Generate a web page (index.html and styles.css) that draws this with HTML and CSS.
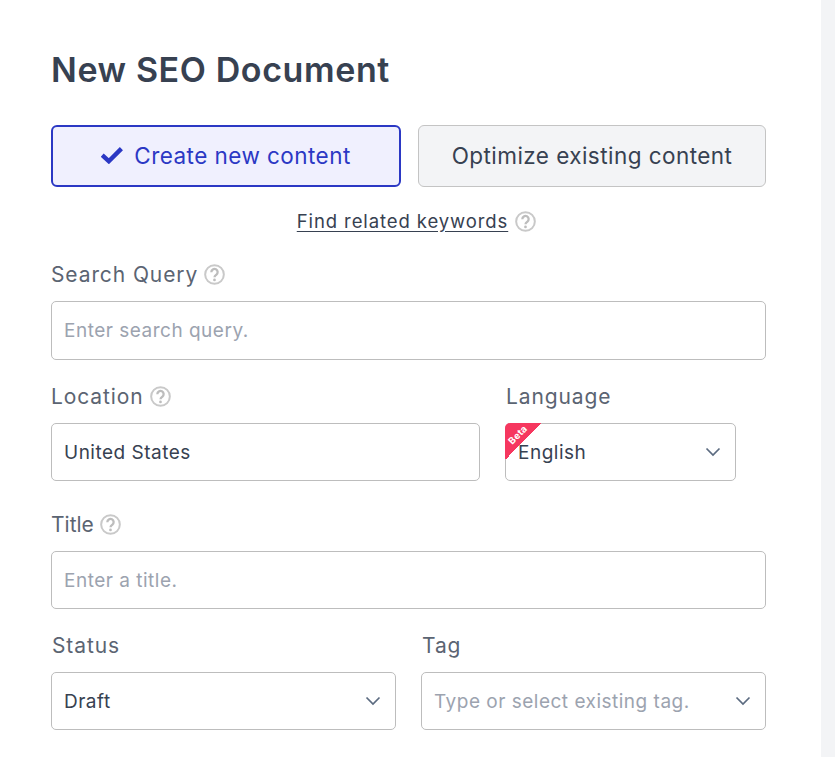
FILE: index.html
```html
<!DOCTYPE html>
<html lang="en">
<head>
<meta charset="utf-8">
<title>New SEO Document</title>
<link rel="stylesheet" href="styles.css">
</head>
<body>
<div class="page">
  <main class="panel">
    <h1 class="title">New SEO Document</h1>
    <div class="modes">
      <button class="mode mode-active" type="button">
        <svg class="check" viewBox="0 0 22 18" width="22" height="18"><path d="M1.2 9.2 7.8 15.2 20.4 2.6" fill="none" stroke="#2b38c4" stroke-width="4.4"/></svg>
        <span>Create new content</span>
      </button>
      <button class="mode mode-other" type="button">Optimize existing content</button>
    </div>
    <div class="related">
      <a class="related-link" href="#">Find related keywords</a>
      <svg class="help" viewBox="0 0 20 20" width="21" height="21"><use href="#q"/></svg>
    </div>

    <div class="field field-query">
      <label class="label">Search Query <svg class="help" viewBox="0 0 20 20" width="21" height="21"><use href="#q"/></svg></label>
      <div class="box box-tall"><span class="placeholder">Enter search query.</span></div>
    </div>

    <div class="row row-location">
      <div class="field field-location">
        <label class="label">Location <svg class="help" viewBox="0 0 20 20" width="21" height="21"><use href="#q"/></svg></label>
        <div class="box"><span class="value">United States</span></div>
      </div>
      <div class="field field-language">
        <label class="label label-shift">Language</label>
        <div class="box box-select">
          <span class="value">English</span>
          <svg class="chevron" viewBox="0 0 16 10" width="16" height="10"><use href="#c"/></svg>
          <span class="ribbon"><span class="ribbon-text">Beta</span></span>
        </div>
      </div>
    </div>

    <div class="field field-title">
      <label class="label"><span class="label-tight">Title</span> <svg class="help" viewBox="0 0 20 20" width="21" height="21"><use href="#q"/></svg></label>
      <div class="box"><span class="placeholder">Enter a title.</span></div>
    </div>

    <div class="row row-status">
      <div class="field field-half">
        <label class="label label-shift">Status</label>
        <div class="box box-select"><span class="value">Draft</span><svg class="chevron" viewBox="0 0 16 10" width="16" height="10"><use href="#c"/></svg></div>
      </div>
      <div class="field field-half">
        <label class="label label-shift">Tag</label>
        <div class="box box-select"><span class="placeholder">Type or select existing tag.</span><svg class="chevron" viewBox="0 0 16 10" width="16" height="10"><use href="#c"/></svg></div>
      </div>
    </div>
  </main>
  <div class="rail"></div>
</div>
<svg class="defs" width="0" height="0" aria-hidden="true">
  <symbol id="q" viewBox="0 0 20 20">
    <circle cx="10" cy="10" r="8.9" fill="none" stroke="#c9c9c9" stroke-width="1.9"/>
    <path d="M7 7.8a3 3 0 1 1 4.7 2.4c-1.1.7-1.7 1.2-1.7 2.5" fill="none" stroke="#bdbdbd" stroke-width="2.2"/>
    <circle cx="10" cy="15.2" r="1.3" fill="#bdbdbd"/>
  </symbol>
  <symbol id="c" viewBox="0 0 16 10">
    <path d="M1.5 1.5 8 8l6.5-6.5" fill="none" stroke="#5b6b80" stroke-width="1.7"/>
  </symbol>
</svg>
</body>
</html>
```

FILE: styles.css
```css
* { box-sizing: border-box; }
html, body { margin: 0; height: 100%; background: #fff; overflow: hidden; }
body { font-family: "Inter", "Open Sans", sans-serif; color: #374151; }
.page { display: flex; height: 757px; }
.panel { width: 821px; padding: 47px 55px 0 51px; }
.rail { width: 14px; background: #f3f4f6; }
.defs { position: absolute; }

.title { margin: 0; height: 47px; font-size: 34px; line-height: 46px; font-weight: 600; color: #374151; letter-spacing: 0.6px; white-space: nowrap; }

.modes { display: flex; gap: 17px; margin-top: 31px; }
.mode { height: 62px; border-radius: 6px; font: inherit; font-size: 22.5px; letter-spacing: 0.45px; display: flex; align-items: center; justify-content: center; padding: 0 0 2px; }
.mode-active { width: 350px; gap: 11px; background: #f0f0fe; border: 2px solid #2b38c4; color: #2b38c4; }
.mode-other { width: 348px; background: #f3f4f6; border: 1px solid #c4c4c4; color: #374151; }
.check { flex: none; }

.related { display: flex; justify-content: center; align-items: center; gap: 7px; height: 24px; margin-top: 22px; padding-left: 16px; font-size: 18.5px; }
.related-link { color: #374151; text-decoration: underline; text-underline-offset: 3px; letter-spacing: 0.9px; }

.help { flex: none; }
.label { display: flex; align-items: center; gap: 6px; height: 26px; font-size: 21px; letter-spacing: 0.9px; color: #5b6472; white-space: nowrap; }
.label-shift { padding-left: 1px; }
.label-tight { letter-spacing: 0; }

.box { position: relative; display: flex; align-items: center; justify-content: space-between; height: 58px; padding: 0 13px 0 12px; margin-top: 14px; border: 1px solid #bdbdbd; border-radius: 5px; background: #fff; font-size: 19px; letter-spacing: 0.5px; }
.box-tall { height: 59px; }
.placeholder { color: #9ca3af; white-space: nowrap; }
.value { color: #374151; white-space: nowrap; }
.chevron { flex: none; margin-right: 1px; }

.field-query { margin-top: 28px; }
.row { display: flex; }
.row-location { margin-top: 23px; gap: 25px; }
.field-location { width: 429px; }
.field-language { width: 231px; }
.field-title { margin-top: 30px; }
.row-status { margin-top: 23px; gap: 25px; }
.field-half { width: 345px; }

.ribbon { position: absolute; left: -1px; top: -1px; width: 37px; height: 37px; overflow: hidden; border-top-left-radius: 5px; background: linear-gradient(135deg, #f6375f 50%, transparent 50%); }
.ribbon-text { position: absolute; left: -2px; top: 7px; width: 30px; transform: rotate(-45deg); font-size: 9.5px; line-height: 10px; font-weight: 700; letter-spacing: 0.3px; color: #fff; text-align: center; }
```
